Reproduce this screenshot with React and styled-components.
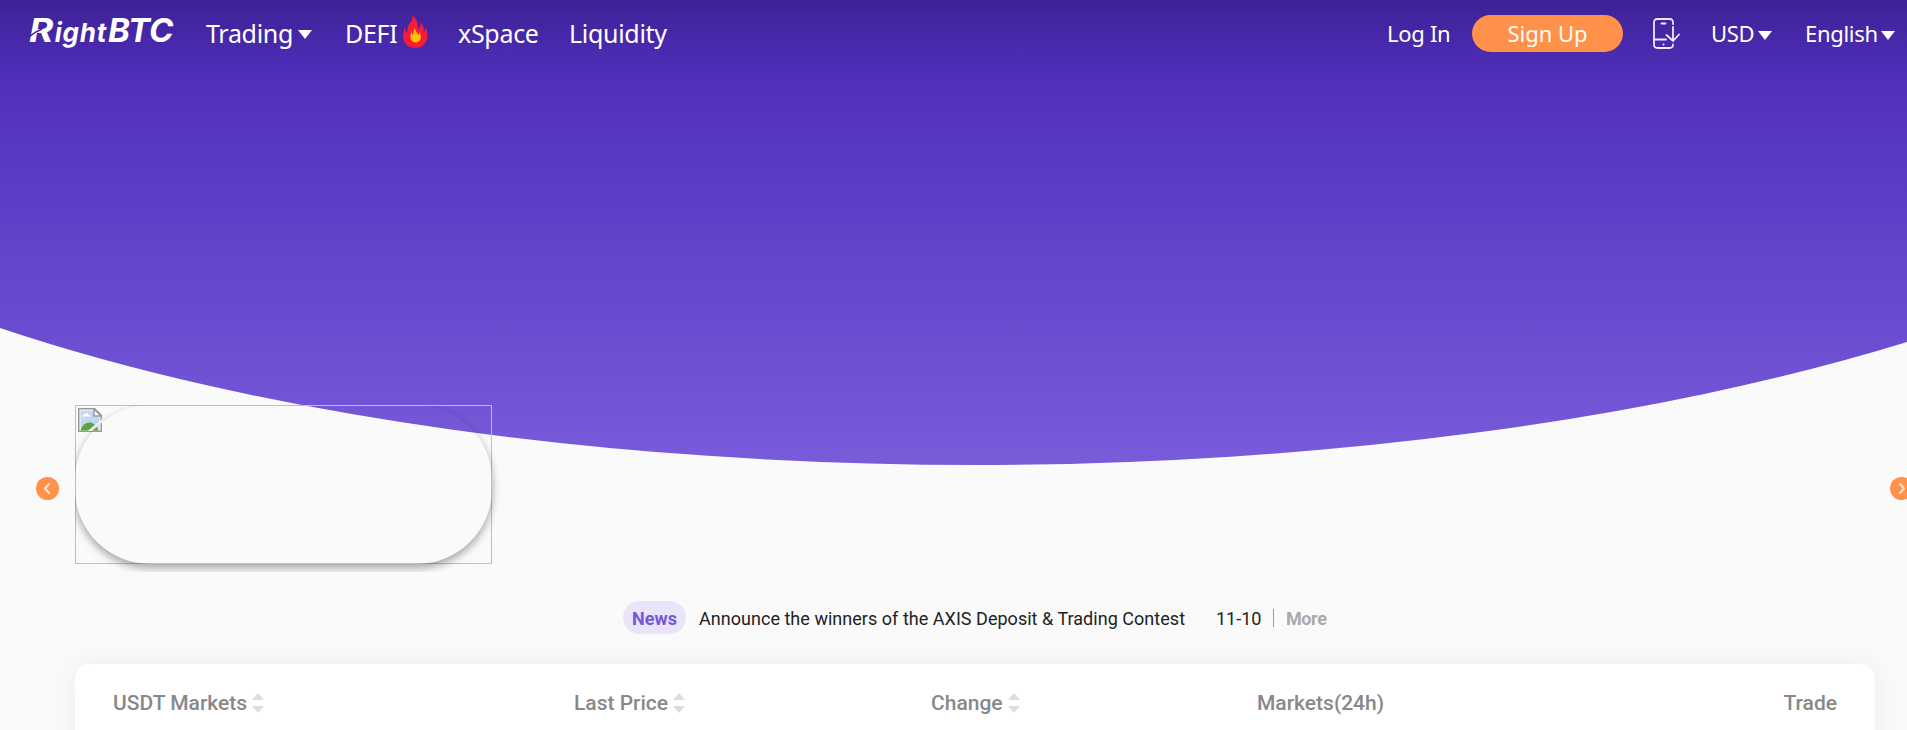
import React from 'react';
import styled, { createGlobalStyle } from 'styled-components';

const GlobalStyle = createGlobalStyle`
    body {
        margin: 0;
        background-color: #fafafa;
        overflow: hidden;
    }
    * {
        box-sizing: border-box;
    }
`;

const Page = styled.div`
    position: relative;
    height: 730px;
    overflow: hidden;
    font-family: Roboto, sans-serif;
    color: #222;
`;

const Wave = styled.svg`
    position: absolute;
    top: 0;
    left: 0;
    display: block;
`;

const Header = styled.header`
    position: relative;
    display: flex;
    justify-content: space-between;
    height: 68px;
    padding: 0 12px 0 29px;
    font-family: 'Noto Sans', 'Open Sans', sans-serif;
    color: #fff;
`;

const Side = styled.div`
    display: flex;
    align-items: center;
    height: 66px;
`;

const Logo = styled.a`
    position: relative;
    display: flex;
    align-items: baseline;
    width: 177px;
    height: 47px;
    font-family: Inter, sans-serif;
    font-weight: 700;
    font-style: italic;
    font-size: 33px;
    line-height: 40px;
    white-space: nowrap;
`;

const LogoInitial = styled.span`
    transform: scaleX(1.12);
    transform-origin: left;
`;

const LogoSmall = styled.span`
    margin: 0 1px 0 4px;
    font-size: 26px;
    letter-spacing: 0.8px;
`;

const LogoCut = styled.svg`
    position: absolute;
    left: 0;
    top: 6px;
`;

const NavItem = styled.a`
    display: flex;
    align-items: center;
    flex: none;
    width: ${props => props.width}px;
    margin-top: ${props => (props.size ? 0 : '-1px')};
    font-size: ${props => props.size || 25}px;
    letter-spacing: -0.3px;
    white-space: nowrap;
`;

const Caret = styled.i`
    margin: 4px 0 0 ${props => props.gap || 5}px;
    border: 7px solid transparent;
    border-top: 9px solid #fff;
    border-bottom: 0;
`;

const Flame = styled.svg`
    margin: -3px 0 0 6px;
`;

const SignUp = styled.button`
    width: 151px;
    height: 37px;
    margin-right: 30px;
    padding: 0;
    border: 0;
    border-radius: 19px;
    background-color: #ff914a;
    color: #fff;
    font-family: inherit;
    font-size: 22px;
`;

const PhoneIcon = styled.svg`
    margin-right: 31px;
`;

const Carousel = styled.section`
    position: relative;
    display: flex;
    align-items: center;
    width: 1913px;
    margin-top: 337px;
    padding-left: 36px;
`;

const Arrow = styled.button`
    display: flex;
    align-items: center;
    justify-content: center;
    flex: none;
    width: 23px;
    height: 23px;
    margin-top: 7px;
    padding: 0;
    border: 0;
    border-radius: 50%;
    background-color: #ff914a;
`;

const Slides = styled.div`
    flex: 1;
    padding-left: 16px;
`;

const Slide = styled.div`
    position: relative;
    width: 417px;
    height: 159px;
    padding: 2px;
    border: 1px solid #c0c0c0;
    clip-path: inset(0 -12px -8px 0);

    &::before {
        content: '';
        position: absolute;
        inset: -1px;
        border-radius: 75px;
        box-shadow: 0 4px 8px rgba(0, 0, 0, 0.35);
    }
`;

const News = styled.div`
    position: relative;
    display: flex;
    align-items: center;
    height: 33px;
    margin: 37px 0 0 623px;
    font-size: 18px;
    white-space: nowrap;
`;

const Badge = styled.span`
    width: 63px;
    height: 33px;
    margin-right: 13px;
    border-radius: 17px;
    background-color: #e9e4f9;
    color: #7657d8;
    font-weight: 700;
    line-height: 35px;
    text-align: center;
`;

const Headline = styled.span`
    width: 517px;
    padding-top: 2px;
    letter-spacing: 0.03px;
`;

const NewsDate = styled.span`
    width: 57px;
    padding-top: 2px;
`;

const Divider = styled.i`
    width: 1px;
    height: 18px;
    margin-right: 12px;
    background-color: #999;
`;

const More = styled.a`
    padding-top: 2px;
    font-weight: 700;
    letter-spacing: -0.4px;
    color: #aaa;
`;

const Market = styled.section`
    position: relative;
    display: flex;
    width: 1800px;
    height: 200px;
    margin: 30px 0 0 75px;
    padding: 24px 38px;
    border-radius: 15px;
    background-color: #fff;
    box-shadow: 0 0 30px rgba(0, 0, 0, 0.06);
`;

const Cell = styled.div`
    display: flex;
    align-items: center;
    justify-content: ${props => (props.last ? 'flex-end' : 'flex-start')};
    flex: ${props => (props.last ? '1' : `0 0 ${props.width}px`)};
    height: 30px;
    font-size: 21px;
    font-weight: 500;
    white-space: nowrap;
    color: #888;
`;

const Sort = styled.span`
    display: flex;
    flex-direction: column;
    justify-content: space-between;
    height: 20px;
    margin-left: 5px;

    &::before,
    &::after {
        content: '';
        border: 6px solid transparent;
    }
    &::before {
        border-top: 0;
        border-bottom: 7px solid #ddd;
    }
    &::after {
        border-bottom: 0;
        border-top: 7px solid #ddd;
    }
`;

const columns = [
    { title: 'USDT Markets', width: 461, sort: true },
    { title: 'Last Price', width: 357, sort: true },
    { title: 'Change', width: 326, sort: true },
    { title: 'Markets(24h)', width: 300 },
    { title: 'Trade', last: true },
];

const Chevron = ({ d }) => (
    <svg width="9" height="13" viewBox="0 0 9 13">
        <path d={d} fill="none" stroke="#ffe9dc" strokeWidth="2" strokeLinecap="round" strokeLinejoin="round" />
    </svg>
);

const IconBox = styled.svg`
    display: block;
`;

const BrokenImage = () => (
    <IconBox width="24" height="24" viewBox="0 0 24 24">
        <path d="M.75.75h16l6.5 6.5v16H.75z" fill="#fff" stroke="#999" strokeWidth="1.5" />
        <path d="M2.5 2.5h13.5v6h5.5v13h-19z" fill="#c4d6f5" />
        <path d="M16 1v7h7z" fill="#fff" stroke="#999" strokeWidth="1.5" />
        <path d="M4 8.5c0-1.8 2-2 2.4-2C7 4.5 10 4.5 10.3 6.5c1.7 0 2 1 2 2z" fill="#fff" />
        <path d="M2.5 22.5c3-10.500 14-11 18 0z" fill="#57a83a" />
        <path d="M9.5 23 24 11v3.500l-10 8.500z" fill="#fafafa" />
    </IconBox>
);

class App extends React.Component {

    render() {
        return (
            <Page>
                <GlobalStyle />
                <Wave width="1907" height="466" viewBox="0 0 1907 466">
                    <defs>
                        <linearGradient id="sky" x1="0" y1="0" x2="0" y2="465" gradientUnits="userSpaceOnUse">
                            <stop offset="0" stopColor="#3d2197" />
                            <stop offset="0.18" stopColor="#5230bd" />
                            <stop offset="1" stopColor="#785cda" />
                        </linearGradient>
                    </defs>
                    <path d="M0 0H1907V342A1400 479 0 0 1 977 465A1400 479 0 0 1 0 328Z" fill="url(#sky)" />
                </Wave>

                <Header>
                    <Side>
                        <Logo>
                            <LogoInitial>R</LogoInitial><LogoSmall>ight</LogoSmall>BTC
                            <LogoCut width="26" height="30" viewBox="0 0 26 30">
                                <path d="M0 21 7 16 13 13" fill="none" stroke="#44269f" strokeWidth="1.500" />
                            </LogoCut>
                        </Logo>
                        <NavItem width={139}>Trading<Caret /></NavItem>
                        <NavItem width={113}>
                            DEFI
                            <Flame width="25" height="33" viewBox="0 0 25 33">
                                <path d="M9 0c5 4 6 8 6 14 2-1 3-4 2.500-7 3 3 3 6 3.500 9 1 0 1.500-2 1.500-4C26 19 26 32 13 33 0 33-2 22 2 12c0 3 1 5 2 6 1-4 0-7 3-10 2-2 3-5 2-8z" fill="#f41c36" />
                                <path d="M12 13c0 4 3 4 3 7 1 0 1-2 1-3 2 3 2 5 1.500 7C16 29 8 28.500 7.500 23c0-2 0-4 1-6 0 2 1 3 1.500 3 0-3 1-5 2-7z" fill="#ffc400" />
                            </Flame>
                        </NavItem>
                        <NavItem width={111}>xSpace</NavItem>
                        <NavItem width={110}>Liquidity</NavItem>
                    </Side>
                    <Side>
                        <NavItem width={85} size={22}>Log In</NavItem>
                        <SignUp>Sign Up</SignUp>
                        <PhoneIcon width="27" height="31" viewBox="0 0 27 31" fill="none" stroke="#eee9ff" strokeWidth="1.800" strokeLinecap="round">
                            <path d="M20 6V4.500Q20 1 16.500 1h-12Q1 1 1 4.500v22Q1 30 4.500 30h12q3.500 0 3.500-3.500" />
                            <path d="M8.500 5.500h4M1 21.500h12M10.500 26.500h.1M20 9v13.500M13.500 17l6.500 6 6-6.500" />
                        </PhoneIcon>
                        <NavItem width={94} size={22}>USD<Caret gap={4} /></NavItem>
                        <NavItem width={90} size={22}>English<Caret gap={3} /></NavItem>
                    </Side>
                </Header>

                <Carousel>
                    <Arrow><Chevron d="M6 2 2 6.500 6 11" /></Arrow>
                    <Slides>
                        <Slide><BrokenImage /></Slide>
                    </Slides>
                    <Arrow><Chevron d="M3 2 7 6.500 3 11" /></Arrow>
                </Carousel>

                <News>
                    <Badge>News</Badge>
                    <Headline>Announce the winners of the AXIS Deposit &amp; Trading Contest</Headline>
                    <NewsDate>11-10</NewsDate>
                    <Divider />
                    <More>More</More>
                </News>

                <Market>
                    {columns.map(column =>
                        <Cell key={column.title} width={column.width} last={column.last ? 1 : 0}>
                            {column.title}
                            {column.sort ? <Sort /> : null}
                        </Cell>)}
                </Market>
            </Page>
        )
    }
}

export default App;
